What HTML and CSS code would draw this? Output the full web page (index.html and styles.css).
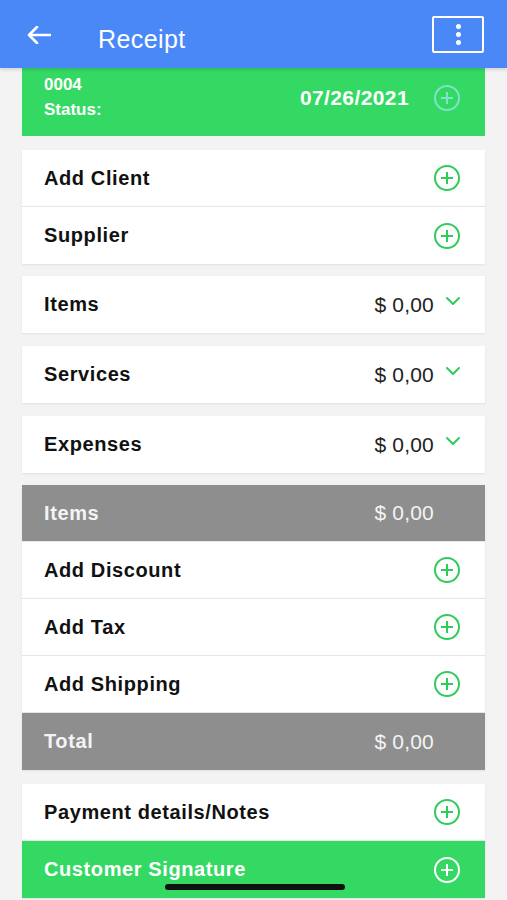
FILE: index.html
```html
<!DOCTYPE html>
<html lang="en">
<head>
	<meta charset="UTF-8">
	<title>Receipt</title>
	<link rel="stylesheet" href="styles.css">
</head>
<body>
	<div class="topbar">
		<svg class="back" width="24" height="18" viewBox="0 0 24 18">
			<path d="M23 9H2M10 1L2 9l8 8" fill="none" stroke="#fff" stroke-width="2.6" stroke-linecap="round" stroke-linejoin="round"/>
		</svg>
		<div class="title">Receipt</div>
		<div class="menu">
			<span class="dot"></span><span class="dot"></span><span class="dot"></span>
		</div>
	</div>

	<div class="page">
		<div class="head">
			<div class="head-left">
				<div>0004</div>
				<div>Status:</div>
			</div>
			<div class="date">07/26/2021</div>
			<svg class="ico" width="26" height="26" viewBox="0 0 26 26">
				<circle cx="13" cy="13" r="12" fill="none" stroke="#7fe3c8" stroke-width="2"/>
				<path d="M13 7v12M7 13h12" stroke="#7fe3c8" stroke-width="2"/>
			</svg>
		</div>

		<div class="group g1">
			<div class="row">
				<div class="label">Add Client</div>
				<svg class="ico" width="26" height="26" viewBox="0 0 26 26"><circle cx="13" cy="13" r="12" fill="none" stroke="#2fcc5c" stroke-width="2"/><path d="M13 7v12M7 13h12" stroke="#2fcc5c" stroke-width="2"/></svg>
			</div>
			<div class="row">
				<div class="label">Supplier</div>
				<svg class="ico" width="26" height="26" viewBox="0 0 26 26"><circle cx="13" cy="13" r="12" fill="none" stroke="#2fcc5c" stroke-width="2"/><path d="M13 7v12M7 13h12" stroke="#2fcc5c" stroke-width="2"/></svg>
			</div>
		</div>

		<div class="group g2">
			<div class="row">
				<div class="label">Items</div>
				<div class="money">$ 0,00</div>
				<svg class="ico chev" width="26" height="10" viewBox="0 0 26 10"><path d="M13 2l6 6 6-6" fill="none" stroke="#2fcc5c" stroke-width="2" stroke-linecap="round" stroke-linejoin="round"/></svg>
			</div>
		</div>

		<div class="group g3">
			<div class="row">
				<div class="label">Services</div>
				<div class="money">$ 0,00</div>
				<svg class="ico chev" width="26" height="10" viewBox="0 0 26 10"><path d="M13 2l6 6 6-6" fill="none" stroke="#2fcc5c" stroke-width="2" stroke-linecap="round" stroke-linejoin="round"/></svg>
			</div>
		</div>

		<div class="group g3">
			<div class="row">
				<div class="label">Expenses</div>
				<div class="money">$ 0,00</div>
				<svg class="ico chev" width="26" height="10" viewBox="0 0 26 10"><path d="M13 2l6 6 6-6" fill="none" stroke="#2fcc5c" stroke-width="2" stroke-linecap="round" stroke-linejoin="round"/></svg>
			</div>
		</div>

		<div class="group g2">
			<div class="row gray">
				<div class="label">Items</div>
				<div class="money">$ 0,00</div>
				<div class="ico"></div>
			</div>
			<div class="row">
				<div class="label">Add Discount</div>
				<svg class="ico" width="26" height="26" viewBox="0 0 26 26"><circle cx="13" cy="13" r="12" fill="none" stroke="#2fcc5c" stroke-width="2"/><path d="M13 7v12M7 13h12" stroke="#2fcc5c" stroke-width="2"/></svg>
			</div>
			<div class="row">
				<div class="label">Add Tax</div>
				<svg class="ico" width="26" height="26" viewBox="0 0 26 26"><circle cx="13" cy="13" r="12" fill="none" stroke="#2fcc5c" stroke-width="2"/><path d="M13 7v12M7 13h12" stroke="#2fcc5c" stroke-width="2"/></svg>
			</div>
			<div class="row">
				<div class="label">Add Shipping</div>
				<svg class="ico" width="26" height="26" viewBox="0 0 26 26"><circle cx="13" cy="13" r="12" fill="none" stroke="#2fcc5c" stroke-width="2"/><path d="M13 7v12M7 13h12" stroke="#2fcc5c" stroke-width="2"/></svg>
			</div>
			<div class="row gray">
				<div class="label">Total</div>
				<div class="money">$ 0,00</div>
				<div class="ico"></div>
			</div>
		</div>

		<div class="group g4">
			<div class="row">
				<div class="label">Payment details/Notes</div>
				<svg class="ico" width="26" height="26" viewBox="0 0 26 26"><circle cx="13" cy="13" r="12" fill="none" stroke="#2fcc5c" stroke-width="2"/><path d="M13 7v12M7 13h12" stroke="#2fcc5c" stroke-width="2"/></svg>
			</div>
			<div class="row green">
				<div class="label">Customer Signature</div>
				<svg class="ico" width="26" height="26" viewBox="0 0 26 26"><circle cx="13" cy="13" r="12" fill="none" stroke="#fff" stroke-width="2"/><path d="M13 7v12M7 13h12" stroke="#fff" stroke-width="2"/></svg>
			</div>
		</div>
	</div>

	<div class="homebar"></div>
</body>
</html>
```
FILE: styles.css
```css
html,body{
	margin: 0;
	padding: 0;
}
body{
	background: #f3f3f3;
	font-family: "Liberation Sans", Arial, sans-serif;
	width: 507px;
	height: 900px;
	overflow: hidden;
	position: relative;
}
.topbar{
	height: 68px;
	background: #4a88f8;
	display: flex;
	align-items: center;
	padding: 0 23px 0 27px;
	box-sizing: border-box;
	box-shadow: 0 2px 3px rgba(0,0,0,0.12);
	position: relative;
	z-index: 2;
}
.back{
	margin-top: 2px;
}
.title{
	color: #fff;
	font-size: 25px;
	letter-spacing: 0.4px;
	margin-left: 47px;
	margin-top: 10px;
	flex: 1;
}
.menu{
	width: 48px;
	height: 33px;
	border: 2px solid #fff;
	border-radius: 2px;
	display: flex;
	flex-direction: column;
	align-items: center;
	justify-content: center;
	gap: 3px;
}
.dot{
	width: 5px;
	height: 5px;
	border-radius: 50%;
	background: #fff;
}
.page{
	padding: 0 22px;
}
.head{
	height: 68px;
	box-sizing: border-box;
	padding: 0 25px 8px 22px;
	background: #34d964;
	display: flex;
	align-items: center;
	color: #fff;
	font-weight: bold;
}
.head-left{
	flex: 1;
	font-size: 17px;
	line-height: 25px;
	margin-top: -2px;
}
.date{
	font-size: 21px;
	letter-spacing: 0.4px;
	margin-right: 25px;
}
.group{
	box-shadow: 0 1px 2px rgba(0,0,0,0.08);
}
.g1{
	margin-top: 14px;
}
.g2{
	margin-top: 12px;
}
.g3{
	margin-top: 13px;
}
.g4{
	margin-top: 14px;
}
.row{
	height: 56px;
	background: #fff;
	border-bottom: 1px solid #e6e6e6;
	display: flex;
	align-items: center;
	padding: 0 25px 0 22px;
}
.row:last-child{
	border-bottom: none;
	height: 57px;
}
.label{
	flex: 1;
	font-size: 20px;
	font-weight: bold;
	letter-spacing: 0.6px;
	color: #111;
}
.money{
	font-size: 21px;
	letter-spacing: 0.2px;
	color: #222;
}
.ico{
	width: 26px;
	flex: none;
}
.chev{
	margin-top: -8px;
}
.gray{
	background: #8e8e8e;
}
.gray .label,
.gray .money{
	color: #f4f4f4;
}
.green{
	background: #34d964;
}
.green .label{
	color: #fff;
}
.homebar{
	position: absolute;
	left: 165px;
	bottom: 10px;
	width: 180px;
	height: 6px;
	border-radius: 3px;
	background: #111;
}
```
